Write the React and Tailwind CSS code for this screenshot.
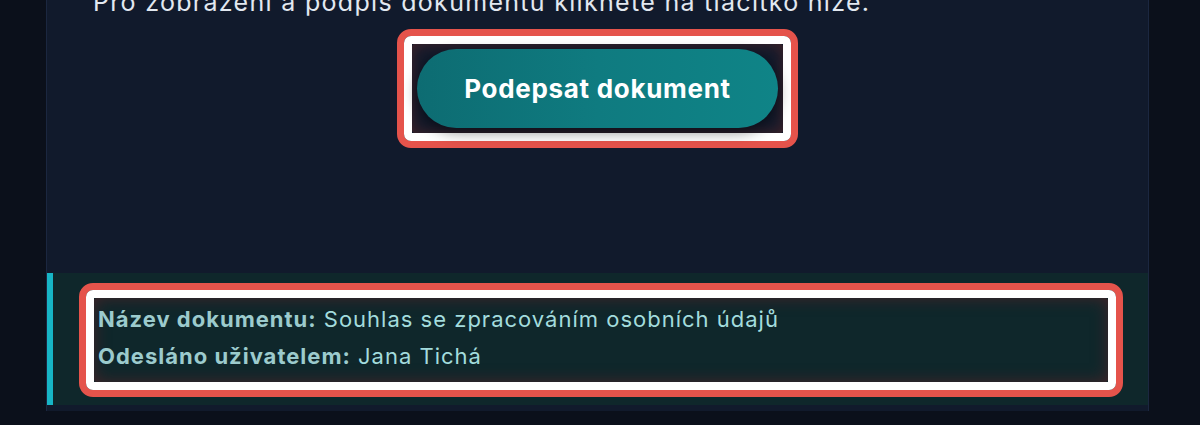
import React from "react";

const Highlight = ({ children, className = "" }) => {
  return (
    <div className={`rounded-[14px] border-[7px] border-[#e5534b] ${className}`}>
      <div className="rounded-[7px] border-[8px] border-white">
        <div className="rounded-[3px] shadow-[inset_0_0_16px_rgba(72,36,40,0.95)]">
          {children}
        </div>
      </div>
    </div>
  );
};

const App = () => {
  return (
    <div
      className="h-[425px] w-[1200px] overflow-hidden bg-[#0b101b]"
      style={{ fontFamily: "Inter, 'Noto Sans', sans-serif" }}
    >
      <div className="ml-[46px] h-full w-[1103px] border-x border-[#1b2740] bg-[#111a2c]">
        <p className="-mt-[14px] pl-[46px] text-[25px] leading-[32px] tracking-[1.3px] text-[#e2e8f0]">
          Pro zobrazení a podpis dokumentu klikněte na tlačítko níže.
        </p>

        <div className="mt-[11px] flex justify-center">
          <Highlight>
            <div className="p-[5px]">
              <button className="flex h-[79px] w-[361px] items-center justify-center rounded-full bg-gradient-to-r from-[#0d6c72] via-[#0f7b80] to-[#0f8487] text-[26px] font-bold tracking-[0.7px] text-white shadow-[0_4px_14px_rgba(0,0,0,0.45)]">
                Podepsat dokument
              </button>
            </div>
          </Highlight>
        </div>

        <div className="mt-[125px] border-l-[6px] border-[#17b5c6] bg-[#0f272b] pb-[8px] pl-[26px] pr-[25px] pt-[10px]">
          <Highlight>
            <div className="pb-[7px] pl-[4px] pt-[3px] text-[22px] leading-[37px] tracking-[1px] text-[#a3dcdd]">
              <p>
                <span className="font-bold text-[#9ccbcd]">Název dokumentu:</span>{" "}
                Souhlas se zpracováním osobních údajů
              </p>
              <p>
                <span className="font-bold text-[#9ccbcd]">Odesláno uživatelem:</span>{" "}
                Jana Tichá
              </p>
            </div>
          </Highlight>
        </div>
      </div>
    </div>
  );
};

export default App;
